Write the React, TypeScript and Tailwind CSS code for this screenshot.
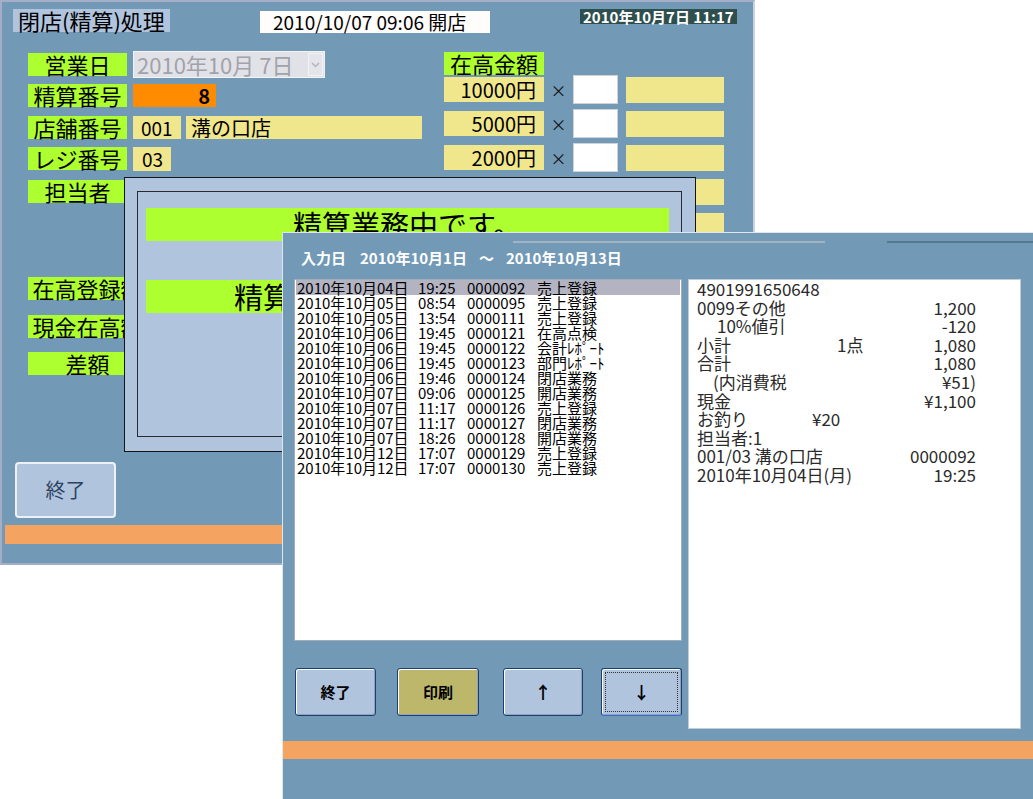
import React from "react";

const LIST_ROWS: [string, string, string, string][] = [
  ["2010年10月04日", "19:25", "0000092", "売上登録"],
  ["2010年10月05日", "08:54", "0000095", "売上登録"],
  ["2010年10月05日", "13:54", "0000111", "売上登録"],
  ["2010年10月06日", "19:45", "0000121", "在高点検"],
  ["2010年10月06日", "19:45", "0000122", "会計ﾚﾎﾟｰﾄ"],
  ["2010年10月06日", "19:45", "0000123", "部門ﾚﾎﾟｰﾄ"],
  ["2010年10月06日", "19:46", "0000124", "閉店業務"],
  ["2010年10月07日", "09:06", "0000125", "開店業務"],
  ["2010年10月07日", "11:17", "0000126", "売上登録"],
  ["2010年10月07日", "11:17", "0000127", "閉店業務"],
  ["2010年10月07日", "18:26", "0000128", "開店業務"],
  ["2010年10月12日", "17:07", "0000129", "売上登録"],
  ["2010年10月12日", "17:07", "0000130", "売上登録"],
];

type ReceiptLine = {
  left: string;
  right?: string;
  mid?: string;
  leftCls?: string;
};

const RECEIPT: ReceiptLine[] = [
  { left: "4901991650648" },
  { left: "0099その他", right: "1,200" },
  { left: "10%値引", right: "-120", leftCls: "pl-[20px]" },
  { left: "小計", mid: "1点", leftCls: "w-[140px] shrink-0", right: "1,080" },
  { left: "合計", right: "1,080" },
  { left: "(内消費税", right: "¥51)", leftCls: "pl-[16px]" },
  { left: "現金", right: "¥1,100" },
  { left: "お釣り", mid: "¥20", leftCls: "w-[115px] shrink-0" },
  { left: "担当者:1" },
  { left: "001/03 溝の口店", right: "0000092" },
  { left: "2010年10月04日(月)", right: "19:25" },
];

const DENOMS = ["10000円", "5000円", "2000円", "1000円", "500円"];

function Label({ text, wide }: { text: string; wide?: boolean }) {
  return (
    <div
      className={`${
        wide ? "w-[119px]" : "w-[99px]"
      } h-[23px] shrink-0 whitespace-nowrap bg-[#adff2f] text-center text-[22px] leading-[23px] text-black`}
    >
      {text}
    </div>
  );
}

function DateSelect() {
  return (
    <div className="ml-[6px] flex h-[27px] w-[192px] items-center border border-[#f3f3f6] bg-[#e1e2e8] pl-[3px] text-[22px] leading-[25px] text-[#a2a2aa]">
      <span className="flex-1 whitespace-pre">2010年10月 7日</span>
      <span className="mr-[1px] flex h-[23px] w-[15px] items-center justify-center border border-[#f3f3f6] bg-[#e4e5ea]">
        <svg width="9" height="6" viewBox="0 0 9 6">
          <path d="M1 1 L4.5 4.5 L8 1" fill="none" stroke="#b4b4bc" strokeWidth="1.5" />
        </svg>
      </span>
    </div>
  );
}

function BackWindow() {
  return (
    <div className="absolute left-0 top-0 h-[565px] w-[755px] border-2 border-[#a5aec6] border-r-[#c9d3e0] bg-[#7299b5]">
      <div className="flex items-start pt-[7px]">
        <div className="ml-[11px] h-[23px] w-[157px] whitespace-nowrap bg-[#b0c4de] pl-[5px] text-[22px] leading-[23px] text-black">
          閉店(精算)処理
        </div>
        <div className="ml-[90px] mt-[2px] h-[22px] w-[230px] whitespace-nowrap bg-[#fffcfc] pl-[13px] text-[19px] leading-[22px] text-black">
          2010/10/07 09:06 開店
        </div>
        <div className="ml-[90px] h-[15px] w-[157px] whitespace-nowrap bg-[#2f4f4f] pl-[3px] text-[15px] font-bold leading-[15px] text-white">
          2010年10月7日 11:17
        </div>
      </div>

      <div className="mt-[18px] flex">
        <div className="ml-[26px] flex w-[394px] flex-col">
          <div className="flex h-[27px] items-center">
            <Label text="営業日" />
            <DateSelect />
          </div>
          <div className="mt-[6px] flex">
            <Label text="精算番号" />
            <div className="ml-[6px] h-[23px] w-[83px] bg-[#ff8c00] pr-[6px] text-right text-[20px] font-bold leading-[23px] text-black">
              8
            </div>
          </div>
          <div className="mt-[9px] flex">
            <Label text="店舗番号" />
            <div className="ml-[6px] h-[23px] w-[48px] bg-[#f0e68c] pl-[8px] text-[19px] leading-[23px] text-black">
              001
            </div>
            <div className="ml-[5px] h-[23px] w-[236px] bg-[#f0e68c] pl-[5px] text-[20px] leading-[23px] text-black">
              溝の口店
            </div>
          </div>
          <div className="mt-[8px] flex">
            <Label text="レジ番号" />
            <div className="ml-[6px] h-[24px] w-[38px] bg-[#f0e68c] pl-[9px] text-[19px] leading-[24px] text-black">
              03
            </div>
          </div>
          <div className="mt-[9px] flex">
            <Label text="担当者" />
          </div>
          <div className="mt-[74px] flex">
            <Label text="在高登録額" wide />
          </div>
          <div className="mt-[15px] flex">
            <Label text="現金在高額" wide />
          </div>
          <div className="mt-[14px] flex">
            <Label text="差額" wide />
          </div>
        </div>

        <div className="ml-[22px] flex flex-col">
          <div className="mt-[1px] h-[23px] w-[100px] bg-[#adff2f] text-center text-[22px] leading-[23px] text-black">
            在高金額
          </div>
          <div className="flex flex-col gap-[5px]">
            {DENOMS.map((d) => (
              <div key={d} className="flex h-[29px] items-center">
                <div className="h-[25px] w-[100px] bg-[#f0e68c] pr-[8px] text-right text-[20px] leading-[25px] text-black">
                  {d}
                </div>
                <div className="w-[29px] text-center text-[16px] leading-[16px] text-[#111]">×</div>
                <div className="h-[29px] w-[45px] border border-[#cfd3d8] bg-white" />
                <div className="ml-[8px] h-[26px] w-[98px] bg-[#f0e68c]" />
              </div>
            ))}
          </div>
        </div>
      </div>

      <button
        type="button"
        className="ml-[13px] mt-[87px] flex h-[56px] w-[101px] items-center justify-center rounded-[4px] border-2 border-[#edf1f6] bg-[#b0c4de] text-[20px] text-[#2e4260]"
      >
        終了
      </button>
      <div className="ml-[3px] mt-[7px] h-[19px] w-[745px] bg-[#f4a460]" />
    </div>
  );
}

function BusyDialog() {
  return (
    <div className="absolute left-[124px] top-[177px] h-[275px] w-[572px] border border-[#151515] bg-[#b0c4de] pb-[14px] pl-[12px] pr-[13px] pt-[13px]">
      <div className="h-full w-full border border-[#2a2a2a] pl-[8px] pt-[16px]">
        <div className="h-[33px] w-[523px] whitespace-nowrap bg-[#adff2f] text-center text-[29px] leading-[33px] text-black">
          精算業務中です。
        </div>
        <div className="mt-[39px] h-[33px] w-[523px] whitespace-nowrap bg-[#adff2f] text-center text-[29px] leading-[33px] text-black">
          精算処理を実行しています
        </div>
      </div>
    </div>
  );
}

function FrontButton({
  children,
  tone = "blue",
  focused,
  className,
}: {
  children: React.ReactNode;
  tone?: "blue" | "khaki";
  focused?: boolean;
  className: string;
}) {
  return (
    <button
      type="button"
      className={`relative flex h-[48px] items-center justify-center rounded-[3px] border border-[#1c3f6e] shadow-[inset_1px_1px_0_#ffffff,inset_-1px_-1px_0_#8fa2bd] text-[15px] font-bold text-black ${
        tone === "khaki" ? "bg-[#bdb76b]" : "bg-[#b0c4de]"
      } ${focused ? "border-b-[#3a6bd0]" : ""} ${className}`}
    >
      {focused && (
        <span className="absolute inset-[3px] border border-dotted border-[#333]" />
      )}
      {children}
    </button>
  );
}

function HistoryWindow() {
  return (
    <div className="absolute left-[282px] top-[232px] flex h-[567px] w-[751px] flex-col border-l border-t border-[#dfe6ee] bg-[#7299b5]">
      <div className="relative h-[46px] whitespace-nowrap pl-[18px] pt-[17px] text-[15px] font-bold leading-[16px] text-white">
        <div className="absolute left-[230px] top-[8px] h-[2px] w-[312px] bg-[#a3b3c2]" />
        <div className="absolute left-[604px] top-[8px] h-[2px] w-[146px] bg-[#557891]" />
        <span>入力日</span>
        <span className="ml-[14px]">2010年10月1日</span>
        <span className="ml-[12px]">〜</span>
        <span className="ml-[12px]">2010年10月13日</span>
      </div>

      <div className="flex pl-[11px]">
        <div className="flex flex-col">
          <div className="h-[362px] w-[388px] border border-[#a3adb8] bg-white text-[15px] leading-[15px] text-black">
            {LIST_ROWS.map((r, i) => (
              <div
                key={r[2]}
                className={`mx-[1px] flex h-[15px] whitespace-nowrap pl-[1px] ${
                  i === 0 ? "bg-[#b3b3c2]" : ""
                }`}
              >
                <span className="w-[121px] shrink-0">{r[0]}</span>
                <span className="w-[49px] shrink-0">{r[1]}</span>
                <span className="w-[70px] shrink-0">{r[2]}</span>
                <span>{r[3]}</span>
              </div>
            ))}
          </div>
          <div className="mt-[27px] flex">
            <FrontButton className="ml-[1px] w-[81px]">終了</FrontButton>
            <FrontButton tone="khaki" className="ml-[21px] w-[82px]">
              印刷
            </FrontButton>
            <FrontButton className="ml-[24px] w-[80px] text-[17px]">↑</FrontButton>
            <FrontButton focused className="ml-[18px] w-[81px] text-[17px]">
              ↓
            </FrontButton>
          </div>
        </div>

        <div className="ml-[6px] h-[450px] w-[333px] border border-[#c5cdd8] bg-white pl-[8px] text-[17px] leading-[18.6px] text-[#2a2a2a]">
          {RECEIPT.map((line, i) => (
            <div key={i} className="flex w-[279px] whitespace-pre">
              <span className={line.leftCls ?? ""}>{line.left}</span>
              {line.mid && <span>{line.mid}</span>}
              {line.right && <span className="ml-auto">{line.right}</span>}
            </div>
          ))}
        </div>
      </div>

      <div className="mt-[12px] h-[18px] w-full bg-[#f4a460]" />
    </div>
  );
}

export default function App() {
  return (
    <div className="relative h-[799px] w-[1033px] overflow-hidden bg-white font-['Noto_Sans_CJK_JP',sans-serif]">
      <BackWindow />
      <BusyDialog />
      <HistoryWindow />
    </div>
  );
}
